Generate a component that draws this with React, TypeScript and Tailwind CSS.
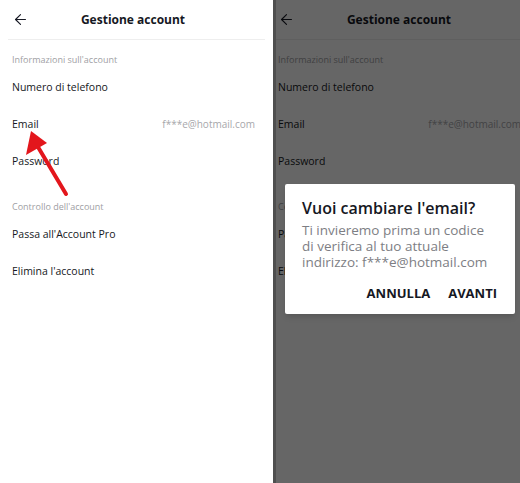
import { ArrowLeft } from "lucide-react";

const font = { fontFamily: '"Open Sans", Roboto, Arial, sans-serif' };

function Row({ label, value }: { label: string; value?: string }) {
  return (
    <div className="h-[37px] flex items-center justify-between pl-3 pr-[18px]">
      <span className="text-[10.5px] text-[#161823]">{label}</span>
      {value && <span className="text-[10px] text-[#a7a7ab]">{value}</span>}
    </div>
  );
}

function Screen() {
  return (
    <div className="w-[273px] bg-white h-[483px]" style={font}>
      <div className="h-[39px] flex items-center pl-3">
        <ArrowLeft size={17} strokeWidth={1.6} className="text-[#161823]" />
        <div className="flex-1 text-center pr-[36px] text-[12px] font-bold text-[#161823]">
          Gestione account
        </div>
      </div>
      <div className="mx-2 border-b border-[#eeeeee]" />
      <div className="mt-[14px] h-[12px] leading-[12px] pl-3 text-[9px] text-[#a0a0a4]">
        Informazioni sull'account
      </div>
      <div className="mt-[3px]">
        <Row label="Numero di telefono" />
        <Row label="Email" value="f***e@hotmail.com" />
        <Row label="Password" />
      </div>
      <div className="mt-[21px] h-[12px] leading-[12px] pl-3 text-[9px] text-[#a0a0a4]">
        Controllo dell'account
      </div>
      <div className="mt-[3px]">
        <Row label="Passa all'Account Pro" />
        <Row label="Elimina l'account" />
      </div>
    </div>
  );
}

export default function App() {
  return (
    <div className="flex w-[520px] h-[483px] overflow-hidden bg-white">
      <div className="relative w-[273px] shrink-0">
        <Screen />
        <svg
          className="absolute left-0 top-0"
          width="80"
          height="210"
          viewBox="0 0 80 210"
        >
          <line x1="66" y1="194" x2="38" y2="147" stroke="#e3161c" strokeWidth="4" strokeLinecap="round" />
          <polygon points="31,131 26,155 47,143" fill="#e3161c" />
        </svg>
      </div>
      <div className="relative flex-1 overflow-hidden border-l-[3px] border-[#4f4f4f]">
        <div className="-ml-[10px]">
          <Screen />
        </div>
        <div className="absolute inset-0 bg-black/60" />
        <div
          className="absolute left-[9px] top-[184px] w-[230px] h-[130px] bg-white rounded-[2px] shadow-md pl-[17px] pr-[18px] pt-[13px]"
          style={font}
        >
          <div className="text-[16px] font-semibold text-[#161823] leading-[22px]">
            Vuoi cambiare l'email?
          </div>
          <div className="mt-[3px] text-[13.5px] leading-[16px] text-[#7d7e84]">
            Ti invieremo prima un codice di verifica al tuo attuale indirizzo: f***e@hotmail.com
          </div>
          <div className="mt-[14px] flex justify-end gap-[18px] text-[13px] font-bold text-[#161823]">
            <span>ANNULLA</span>
            <span>AVANTI</span>
          </div>
        </div>
      </div>
    </div>
  );
}
